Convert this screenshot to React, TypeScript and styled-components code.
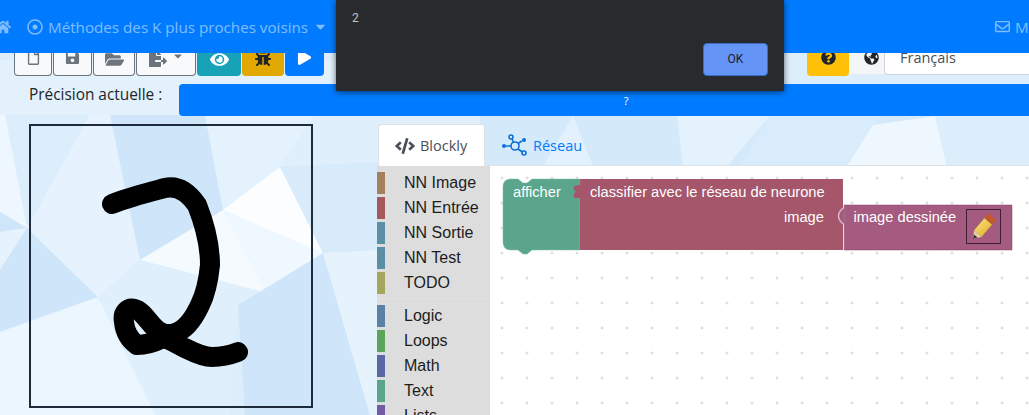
import React from "react";
import styled, { createGlobalStyle } from "styled-components";
import {
  FaBug,
  FaCaretDown,
  FaCode,
  FaEye,
  FaFileExport,
  FaFolderOpen,
  FaGlobeAmericas,
  FaHome,
  FaPlay,
  FaQuestionCircle,
  FaRegDotCircle,
  FaRegEnvelope,
  FaRegFile,
  FaSave,
} from "react-icons/fa";

const GlobalStyle = createGlobalStyle`
  html, body {
    margin: 0;
    height: 100%;
    overflow: hidden;
    background: #dcedfb;
    font-family: "Open Sans", "Roboto", sans-serif;
  }
`;

const Page = styled.div`
  position: relative;
  width: 1029px;
  height: 415px;
  overflow: hidden;
`;

const Backdrop = styled.svg`
  position: absolute;
  left: 0;
  top: 0;
  width: 1029px;
  height: 415px;
`;

const Content = styled.div`
  position: relative;
  display: flex;
  flex-direction: column;
  height: 100%;
`;

const Navbar = styled.nav`
  flex: 0 0 53px;
  display: flex;
  align-items: center;
  justify-content: space-between;
  background: #007bff;
  color: rgba(255, 255, 255, 0.5);
  z-index: 1;
  margin-bottom: -3px;
`;

const NavLeft = styled.div`
  display: flex;
  align-items: center;
  margin-left: -5px;
  gap: 16px;
`;

const NavItem = styled.span`
  display: inline-flex;
  align-items: center;
  gap: 5px;
  white-space: nowrap;
  font-size: 15.2px;
`;

const NavRight = styled.div`
  display: flex;
  width: 34px;
  overflow: hidden;
  white-space: nowrap;
`;

const Toolbar = styled.div`
  display: flex;
  height: 26px;
  padding-left: 14px;
  align-items: stretch;
`;

const ToolButton = styled.div<{ $width: number; $bg: string; $fg: string; $border?: boolean }>`
  box-sizing: border-box;
  width: ${({ $width }) => $width}px;
  display: flex;
  align-items: flex-start;
  justify-content: center;
  gap: 5px;
  background: ${({ $bg }) => $bg};
  color: ${({ $fg }) => $fg};
  border: ${({ $border }) => ($border ? "1px solid #6c757d" : "none")};
  border-top: none;
  border-radius: 0 0 4px 4px;
  margin-right: 1px;
  overflow: hidden;
`;

const Caret = styled.span`
  color: #6c757d;
  display: inline-flex;
`;

const Gap = styled.div<{ $width: number }>`
  width: ${({ $width }) => $width}px;
`;

const GlobeBox = styled.div`
  box-sizing: border-box;
  width: 35px;
  display: flex;
  justify-content: center;
  padding-left: 9px;
  color: #212529;
  background: #f3f5f6;
  margin-left: -1px;
  margin-bottom: 2px;
`;

const LanguageBox = styled.div`
  flex: 1;
  box-sizing: border-box;
  background: #fff;
  border-bottom: 1px solid #ced4da;
  border-left: 1px solid #ced4da;
  border-radius: 0 0 0 4px;
  margin-bottom: 1px;
  padding: 0 0 0 15px;
  color: #495057;
  font-size: 14.5px;
  line-height: 16px;
`;

const AccuracyRow = styled.div`
  display: flex;
  align-items: flex-start;
  height: 32px;
  margin-top: 8px;
  padding-left: 29px;
`;

const AccuracyLabel = styled.div`
  width: 150px;
  color: #212529;
  font-size: 15.4px;
  font-weight: 500;
  line-height: 21px;
`;

const AccuracyBar = styled.div`
  flex: 1;
  height: 32px;
  background: #007bff;
  border-radius: 4px 0 0 4px;
  color: #fff;
  font-size: 11px;
  line-height: 34px;
  text-align: center;
  margin-right: -44px;
`;

const Main = styled.div`
  display: flex;
  margin-top: 8px;
  padding-left: 29px;
  flex: 1;
  min-height: 0;
`;

const DrawBox = styled.div`
  box-sizing: border-box;
  width: 284px;
  height: 284px;
  border: 2px solid #1d2b3a;
  flex: none;
  overflow: hidden;
`;

const DrawSvg = styled.svg`
  display: block;
  margin: -2px;
`;

const EditorColumn = styled.div`
  margin-left: 65px;
  flex: 1;
  display: flex;
  flex-direction: column;
  min-width: 0;
`;

const Tabs = styled.div`
  box-sizing: border-box;
  display: flex;
  height: 42px;
  flex: none;
  border-bottom: 1px solid #dee2e6;
`;

const Tab = styled.div<{ $active?: boolean }>`
  box-sizing: border-box;
  display: flex;
  align-items: center;
  gap: 5px;
  height: 42px;
  width: ${({ $active }) => ($active ? "107px" : "auto")};
  padding: ${({ $active }) => ($active ? "0 16px" : "0 17px")};
  background: ${({ $active }) => ($active ? "#fff" : "transparent")};
  border: ${({ $active }) => ($active ? "1px solid #dee2e6" : "none")};
  border-bottom: none;
  border-radius: 4px 4px 0 0;
  color: ${({ $active }) => ($active ? "#495057" : "#007bff")};
  font-size: 14.5px;
`;

const Editor = styled.div`
  flex: 1;
  display: flex;
  min-height: 0;
  overflow: hidden;
  margin-left: -1px;
`;

const BlocklyToolbox = styled.div`
  width: 113px;
  flex: none;
  background: #dddddd;
  padding-top: 4px;
  overflow: hidden;
`;

const Category = styled.div<{ $color: string }>`
  display: flex;
  align-items: center;
  height: 25px;
  font-family: "Liberation Sans", Arial, sans-serif;
  font-size: 16px;
  color: #1c1c1c;

  &::before {
    content: "";
    flex: none;
    width: 8px;
    height: 22px;
    margin: 0 19px 0 0;
    background: ${({ $color }) => $color};
  }
`;

const Separator = styled.div`
  height: 1px;
  margin: 3px 0 4px;
  background: #e2e2e2;
`;

const Workspace = styled.div`
  flex: 1;
  position: relative;
  background-color: #fff;
  overflow: hidden;
`;

const WorkspaceLayer = styled.svg`
  position: absolute;
  left: 0;
  top: 0;
`;

const BlockLabel = styled.text`
  font-family: "Liberation Sans", Arial, sans-serif;
  font-size: 14.67px;
  fill: #fff;
`;

const Dialog = styled.div`
  position: absolute;
  left: 336px;
  top: 0;
  width: 448px;
  height: 91px;
  box-sizing: border-box;
  background: #292a2d;
  box-shadow: 0 1px 6px rgba(0, 0, 0, 0.6);
  padding: 11px 16px;
  z-index: 5;
  display: flex;
  flex-direction: column;
`;

const DialogMessage = styled.div`
  color: #c2c4c7;
  font-family: "Roboto", sans-serif;
  font-size: 12px;
  line-height: 14px;
`;

const DialogActions = styled.div`
  display: flex;
  justify-content: flex-end;
  margin-top: 18px;
`;

const OkButton = styled.div`
  box-sizing: border-box;
  width: 65px;
  height: 33px;
  border-radius: 4px;
  background: #6494f5;
  border: 1px solid #3b6cc4;
  color: #202124;
  font-family: "Roboto", sans-serif;
  font-size: 12px;
  line-height: 31px;
  text-align: center;
`;

const categories = [
  ["NN Image", "#a5805c"],
  ["NN Entrée", "#a5575c"],
  ["NN Sortie", "#5c8fa5"],
  ["NN Test", "#5c8fa5"],
  ["TODO", "#a5a55c"],
];

const baseCategories = [
  ["Logic", "#5b80a5"],
  ["Loops", "#5ba55b"],
  ["Math", "#5b67a5"],
  ["Text", "#5ba58c"],
  ["Lists", "#745ba5"],
];

const polygons: [string, string][] = [
  ["0,60 400,60 400,130 0,130", "#e3f1fd"],
  ["0,115 5,115 27,228 0,212", "#eef7ff"],
  ["5,115 90,115 30,218", "#dceefc"],
  ["0,212 27,228 0,232", "#cfe6fa"],
  ["0,232 27,228 0,270", "#e6f3fd"],
  ["27,228 98,297 0,332 0,270", "#cfe6fa"],
  ["90,115 110,115 140,260 98,297 27,228", "#e6f3fe"],
  ["110,115 205,115 223,210 140,260", "#cfe6fa"],
  ["205,115 315,115 280,167 223,210", "#e4f2fd"],
  ["140,260 223,210 267,293", "#f5faff"],
  ["223,210 280,167 323,253 267,293", "#f0f8ff"],
  ["223,210 280,167 323,253", "#fbfdff"],
  ["140,260 267,293 238,305 230,415 155,415 98,297", "#dfeffc"],
  ["0,332 98,297 155,415 0,415", "#ecf6fe"],
  ["238,305 323,253 370,415 245,415", "#cfe6fa"],
  ["280,167 315,115 500,115 500,160 378,162", "#dfeffc"],
  ["280,167 378,162 378,250 323,253", "#d8ebfb"],
  ["323,253 378,250 378,415 370,415", "#e6f3fd"],
  ["480,116 1029,116 1029,166 480,166", "#d4e9fa"],
  ["573,116 593,166 543,166", "#e2f1fd"],
  ["677,116 770,116 727,166 683,166", "#e4f2fd"],
  ["770,116 880,116 847,166 740,166", "#d9ecfb"],
  ["873,125 935,116 947,166 847,166", "#eef7fe"],
  ["935,116 1029,116 1029,166 947,166", "#dcedfb"],
];

const gridDots = () => {
  const dots: React.ReactElement[] = [];
  for (let x = 12; x < 540; x += 25) {
    for (let y = 12; y < 260; y += 25) {
      dots.push(
        <path key={`${x}-${y}`} d={`M${x - 1.5} ${y}h3M${x} ${y - 1.5}v3`} stroke="#d4d4d4" strokeWidth="1" />
      );
    }
  }
  return dots;
};

export default function App() {
  return (
    <Page>
      <GlobalStyle />
      <Backdrop viewBox="0 0 1029 415">
        <rect width="1029" height="415" fill="#dcedfb" />
        {polygons.map(([points, fill]) => (
          <polygon key={points} points={points} fill={fill} />
        ))}
      </Backdrop>
      <Content>
        <Navbar>
          <NavLeft>
            <NavItem>
              <FaHome size={16} />
            </NavItem>
            <NavItem>
              <FaRegDotCircle size={16} />
              Méthodes des K plus proches voisins
              <FaCaretDown size={15} />
            </NavItem>
          </NavLeft>
          <NavRight>
            <NavItem>
              <FaRegEnvelope size={15} />
              Mon
            </NavItem>
          </NavRight>
        </Navbar>
        <Toolbar>
          <ToolButton $width={38} $bg="#f8f9fa" $fg="#6c757d" $border>
            <FaRegFile size={15} />
          </ToolButton>
          <ToolButton $width={39} $bg="#f8f9fa" $fg="#6c757d" $border>
            <FaSave size={15} />
          </ToolButton>
          <ToolButton $width={42} $bg="#f8f9fa" $fg="#6c757d" $border>
            <FaFolderOpen size={19} />
          </ToolButton>
          <ToolButton $width={60} $bg="#f8f9fa" $fg="#6c757d" $border>
            <FaFileExport size={18} />
            <Caret>
              <FaCaretDown size={12} />
            </Caret>
          </ToolButton>
          <ToolButton $width={44} $bg="#17a2b8" $fg="#fff">
            <FaEye size={19} />
          </ToolButton>
          <ToolButton $width={42} $bg="#e0a800" $fg="#212529">
            <FaBug size={16} />
          </ToolButton>
          <ToolButton $width={39} $bg="#007bff" $fg="#fff">
            <FaPlay size={15} />
          </ToolButton>
          <Gap $width={482} />
          <ToolButton $width={42} $bg="#ffc107" $fg="#212529">
            <FaQuestionCircle size={15} />
          </ToolButton>
          <GlobeBox>
            <FaGlobeAmericas size={15} />
          </GlobeBox>
          <LanguageBox>Français</LanguageBox>
        </Toolbar>
        <AccuracyRow>
          <AccuracyLabel>Précision actuelle :</AccuracyLabel>
          <AccuracyBar>?</AccuracyBar>
        </AccuracyRow>
        <Main>
          <DrawBox>
            <DrawSvg width="284" height="284" viewBox="29 124 284 284">
              <path
                d="M112 204 C130 197 150 192 165 188 C178 185 188 192 197 205 C205 225 210 245 210 265 C208 285 205 295 200 305 C193 320 185 330 175 333 C165 336 158 332 152 325 C146 318 140 310 135 309 C128 307 122 312 124 322 C125 332 130 340 137 345 C147 345 155 342 163 338 C172 340 178 345 187 349 C197 354 205 357 212 357 C222 357 230 355 238 352"
                fill="none"
                stroke="#000"
                strokeWidth="20"
                strokeLinecap="round"
                strokeLinejoin="round"
              />
            </DrawSvg>
          </DrawBox>
          <EditorColumn>
            <Tabs>
              <Tab $active>
                <FaCode size={20} />
                Blockly
              </Tab>
              <Tab>
                <svg width="26" height="22" viewBox="0 0 26 22" fill="none" stroke="#0d6fd8" strokeWidth="1.6">
                  <circle cx="2" cy="12" r="2" fill="#0d6fd8" stroke="none" />
                  <circle cx="9" cy="3" r="2" />
                  <circle cx="13" cy="12" r="4" />
                  <circle cx="22" cy="6" r="2" fill="#0d6fd8" stroke="none" />
                  <circle cx="22" cy="19" r="2" />
                  <path d="M4 12H9M10 5l1.5 3.5M16 9.5l4-2.5M16 15l4.5 3" />
                </svg>
                Réseau
              </Tab>
            </Tabs>
            <Editor>
              <BlocklyToolbox>
                {categories.map(([name, color]) => (
                  <Category key={name} $color={color}>
                    {name}
                  </Category>
                ))}
                <Separator />
                {baseCategories.map(([name, color]) => (
                  <Category key={name} $color={color}>
                    {name}
                  </Category>
                ))}
              </BlocklyToolbox>
              <Workspace>
                <WorkspaceLayer width="539" height="249">
                  {gridDots()}
                </WorkspaceLayer>
                <WorkspaceLayer width="539" height="249" viewBox="490 166 539 249">
                  <defs>
                    <linearGradient id="pencilBody" x1="0" y1="0" x2="1" y2="1">
                      <stop offset="0" stopColor="#fbe98c" />
                      <stop offset="1" stopColor="#e0a820" />
                    </linearGradient>
                  </defs>
                  <path
                    d="M511 179 h7 l5 4 h4 l5 -4 h48 v71 h-48 l-5 4 h-4 l-5 -4 h-7 q-8 0 -8 -8 v-55 q0 -8 8 -8z"
                    fill="#5ba58c"
                    stroke="#7cb8a4"
                    strokeWidth="0.5"
                  />
                  <path d="M580 179 h263 v71 h-263z" fill="#a5566b" />
                  <path d="M580 185 L574 186 Q573 190 576 191.5 Q573 193 574 198 L580 198z" fill="#a5566b" />
                  <path d="M844 205 h168 v45 h-168z" fill="#a55b80" stroke="#8a4668" strokeWidth="0.5" />
                  <path d="M843.5 205 h1 v45 h-1z" fill="#fff" fillOpacity="0.25" />
                  <path d="M844 208 q-10 8 0 16z" fill="#a55b80" />
                  <path d="M843 208 q-9 8 0 16" fill="none" stroke="#dcbccb" strokeWidth="1.4" />
                  <BlockLabel x="513" y="197">afficher</BlockLabel>
                  <BlockLabel x="590" y="197">classifier avec le réseau de neurone</BlockLabel>
                  <BlockLabel x="784" y="222">image</BlockLabel>
                  <BlockLabel x="853.5" y="222">image dessinée</BlockLabel>
                  <rect x="966.5" y="209.5" width="34" height="34" fill="#a55b80" stroke="#3f2035" strokeWidth="1" />
                  <path d="M974.1 230.2 L981.7 236.7 L992.1 224.6 L984.5 218.1z" fill="url(#pencilBody)" stroke="#b98a20" strokeWidth="0.4" />
                  <path d="M984.5 218.1 L992.1 224.6 L996 220 L988.4 213.5z" fill="#c4572c" />
                  <path d="M974.1 230.2 L981.7 236.7 L973 239z" fill="#e8cfa0" />
                  <path d="M973 239 L974 234.5 L977.5 237.5z" fill="#333" />
                </WorkspaceLayer>
              </Workspace>
            </Editor>
          </EditorColumn>
        </Main>
      </Content>
      <Dialog>
        <DialogMessage>2</DialogMessage>
        <DialogActions>
          <OkButton>OK</OkButton>
        </DialogActions>
      </Dialog>
    </Page>
  );
}
